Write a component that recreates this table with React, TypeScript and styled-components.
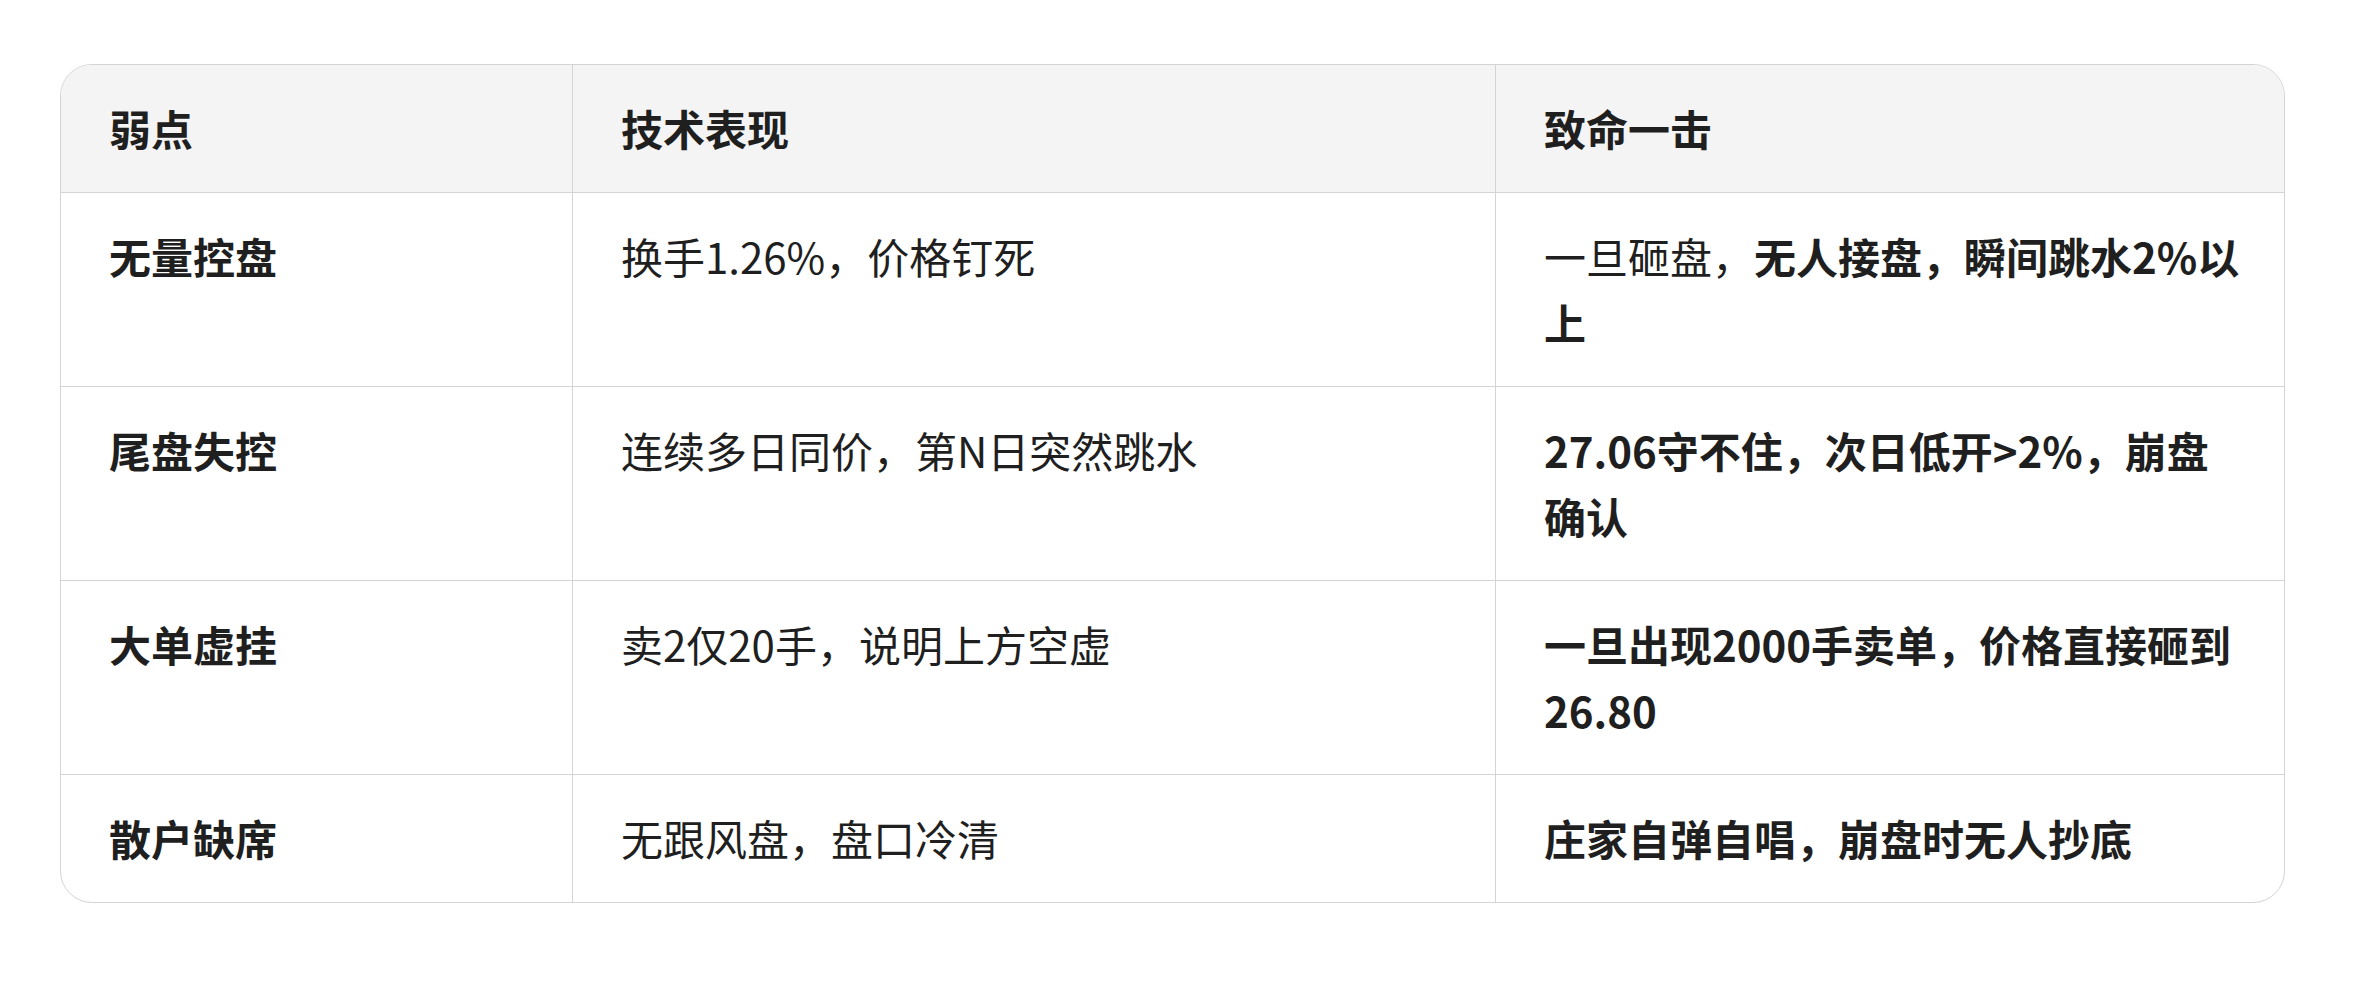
import React from "react";
import styled, { createGlobalStyle } from "styled-components";

const GlobalStyle = createGlobalStyle`
  html, body {
    margin: 0;
    padding: 0;
    background: #ffffff;
  }
  body {
    font-family: "Noto Sans CJK SC", "Noto Sans", sans-serif;
    color: #1f1f1f;
  }
`;

const Page = styled.main`
  padding: 64px 0 0 60px;
`;

const Frame = styled.div`
  width: 2225px;
  box-sizing: border-box;
  border: 1px solid #d4d4d4;
  border-radius: 32px;
  overflow: hidden;
`;

const Table = styled.table`
  width: 100%;
  border-collapse: separate;
  border-spacing: 0;
  table-layout: fixed;
`;

const HeadRow = styled.tr`
  background: #f4f4f4;
`;

const Cell = styled.td<{ $last?: boolean; $bottom?: boolean; $bold?: boolean }>`
  box-sizing: border-box;
  padding: 30px 44px 31px 48px;
  font-size: 42px;
  line-height: 66px;
  font-weight: ${(p) => (p.$bold ? 700 : 400)};
  text-align: left;
  vertical-align: top;
  color: #1f1f1f;
  border-right: ${(p) => (p.$last ? "none" : "1px solid #d4d4d4")};
  border-bottom: ${(p) => (p.$bottom ? "none" : "1px solid #d4d4d4")};
`;

const HeadCell = styled(Cell).attrs({ as: "th" })``;

const Strong = styled.span`
  font-weight: 700;
`;

const Plain = styled.span`
  font-weight: 400;
`;

type Row = { weak: string; tech: string; hit: React.ReactNode };

const rows: Row[] = [
  {
    weak: "无量控盘",
    tech: "换手1.26%，价格钉死",
    hit: (
      <>
        <Plain>一旦砸盘，</Plain>
        <Strong>无人接盘，瞬间跳水2%以上</Strong>
      </>
    ),
  },
  {
    weak: "尾盘失控",
    tech: "连续多日同价，第N日突然跳水",
    hit: <Strong>27.06守不住，次日低开&gt;2%，崩盘确认</Strong>,
  },
  {
    weak: "大单虚挂",
    tech: "卖2仅20手，说明上方空虚",
    hit: <Strong>一旦出现2000手卖单，价格直接砸到26.80</Strong>,
  },
  {
    weak: "散户缺席",
    tech: "无跟风盘，盘口冷清",
    hit: <Strong>庄家自弹自唱，崩盘时无人抄底</Strong>,
  },
];

export default function App() {
  return (
    <>
      <GlobalStyle />
      <Page>
        <Frame>
          <Table>
            <colgroup>
              <col style={{ width: 512 }} />
              <col style={{ width: 923 }} />
              <col />
            </colgroup>
            <thead>
              <HeadRow>
                <HeadCell $bold>弱点</HeadCell>
                <HeadCell $bold>技术表现</HeadCell>
                <HeadCell $bold $last>致命一击</HeadCell>
              </HeadRow>
            </thead>
            <tbody>
              {rows.map((r, i) => {
                const bottom = i === rows.length - 1;
                return (
                  <tr key={r.weak}>
                    <Cell $bold $bottom={bottom}>{r.weak}</Cell>
                    <Cell $bottom={bottom}>{r.tech}</Cell>
                    <Cell $last $bottom={bottom}>{r.hit}</Cell>
                  </tr>
                );
              })}
            </tbody>
          </Table>
        </Frame>
      </Page>
    </>
  );
}
